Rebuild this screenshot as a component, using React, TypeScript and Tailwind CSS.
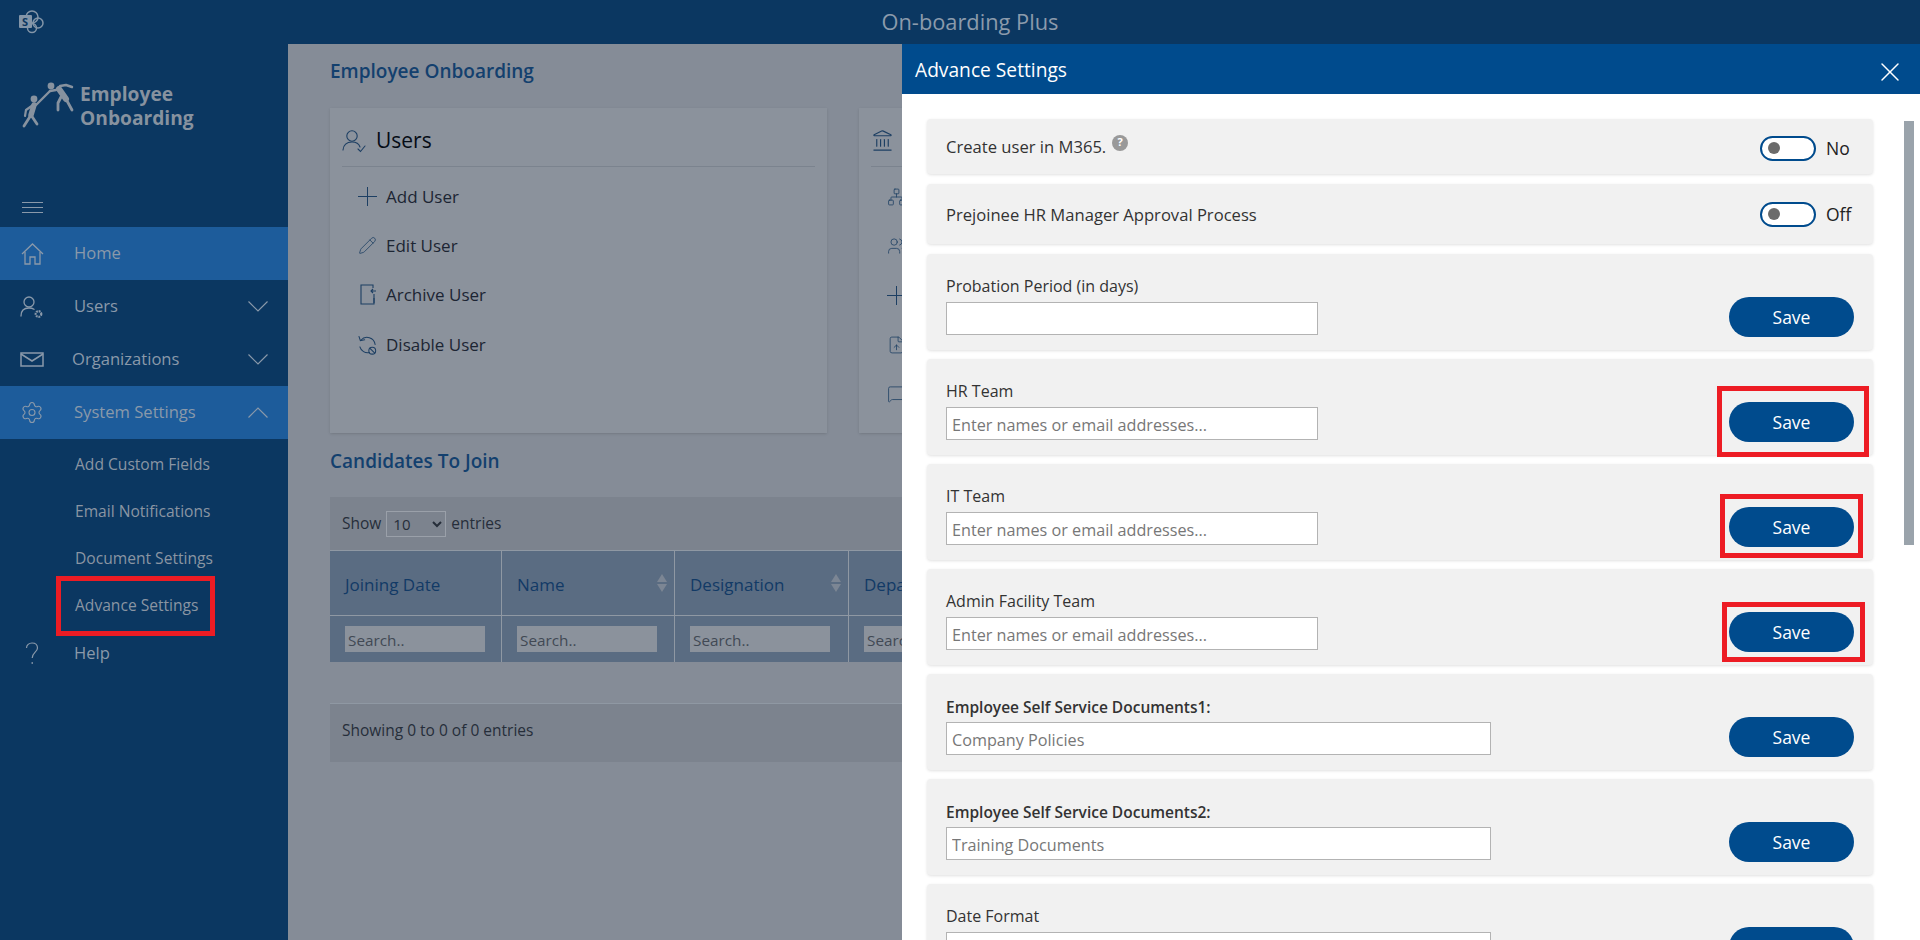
import { FileUp, Landmark, MessageSquare, Network, Pencil, Settings, Users as UsersIcon, X } from 'lucide-react';
import type { ReactNode } from 'react';

const FONT = "font-['Open_Sans','Noto_Sans',sans-serif]";

function SharePointIcon() {
  return (
    <svg width="26" height="24" viewBox="0 0 26 24" fill="none" className="text-[#8395a8]">
      <circle cx="14" cy="7" r="6" stroke="currentColor" strokeWidth="1.5" />
      <circle cx="20" cy="13" r="5" stroke="currentColor" strokeWidth="1.5" />
      <circle cx="14" cy="18" r="4.5" stroke="currentColor" strokeWidth="1.5" />
      <rect x="1" y="5" width="13" height="13" rx="1" fill="currentColor" />
      <text x="4" y="15.5" fontSize="11" fontWeight="700" fill="#0b3761" fontFamily="Open Sans, sans-serif">
        S
      </text>
    </svg>
  );
}

function LogoPeople() {
  return (
    <svg width="52" height="50" viewBox="0 0 52 50" fill="none" stroke="#87929f" strokeLinecap="round" strokeLinejoin="round">
      <circle cx="12" cy="19" r="3.4" fill="#87929f" stroke="none" />
      <circle cx="29" cy="6" r="3.4" fill="#87929f" stroke="none" />
      <path d="M12 25 L9 35" strokeWidth="5.5" />
      <path d="M9 35 L2 46 M9 35 L15 44" strokeWidth="2.8" />
      <path d="M14 25 L28 11" strokeWidth="2.4" />
      <path d="M11 25 L4 30 L3 36" strokeWidth="2.2" />
      <path d="M37 9 L44 19" strokeWidth="6" />
      <path d="M44 19 L50 30" strokeWidth="2.8" />
      <path d="M39 17 L36 23 L36 30" strokeWidth="2.8" />
      <path d="M38 6 L44 5 L50 7" strokeWidth="2.4" />
      <path d="M34 10 L28 11" strokeWidth="2.4" />
    </svg>
  );
}

function HomeIcon() {
  return (
    <svg width="23" height="22" viewBox="0 0 23 22" fill="none" stroke="#8a99aa" strokeWidth="1.3">
      <path d="M1 11 L11.5 1 L22 11" />
      <path d="M4 9 V21 H9 V14 H14 V21 H19 V9" />
    </svg>
  );
}

function MailIcon() {
  return (
    <svg width="24" height="15" viewBox="0 0 24 15" fill="none" stroke="#8a99aa" strokeWidth="1.5">
      <rect x="1" y="1" width="22" height="13" />
      <path d="M1 2 L12 9 L23 2" />
    </svg>
  );
}

function HelpIcon() {
  return (
    <svg width="14" height="23" viewBox="0 0 14 23" fill="none" stroke="#8a99aa" strokeWidth="1.2">
      <path d="M1.5 6 C1.5 3 4 1 7 1 C10.5 1 12.5 3.2 12.5 6 C12.5 10 7.2 10.5 7.2 16" />
      <path d="M7.2 20 V22" />
    </svg>
  );
}

function UserGearIcon() {
  return (
    <svg width="24" height="24" viewBox="0 0 24 24" fill="none" stroke="#8a99aa" strokeWidth="1.3" strokeLinecap="round">
      <circle cx="9" cy="7" r="5" />
      <path d="M1 21 C1 15 4 13 9 13 C11 13 12.5 13.3 14 14.3" />
      <circle cx="18.5" cy="19" r="2.8" strokeWidth="2.2" strokeDasharray="1.8 0.8" strokeLinecap="butt" />
    </svg>
  );
}

function Chevron({ up = false }: { up?: boolean }) {
  return (
    <svg width="20" height="11" viewBox="0 0 20 11" fill="none" stroke="#8a99aa" strokeWidth="1.2">
      <path d={up ? 'M0.5 10.5 L10 1 L19.5 10.5' : 'M0.5 0.5 L10 10 L19.5 0.5'} />
    </svg>
  );
}

function UserCheckIcon() {
  return (
    <svg width="24" height="24" viewBox="0 0 24 24" fill="none" stroke="#1d3f63" strokeWidth="1.1" strokeLinecap="round">
      <circle cx="10" cy="7" r="5.2" />
      <path d="M1 21 C1.5 15.5 5 13 10 13 C14 13 17 15 18 18" />
      <path d="M16 20 L18.5 22.5 L23 17" />
    </svg>
  );
}

function PlusIcon() {
  return (
    <svg width="19" height="19" viewBox="0 0 19 19" fill="none" stroke="#1d3f63" strokeWidth="1">
      <path d="M9.5 0 V19 M0 9.5 H19" />
    </svg>
  );
}

function ArchiveUserIcon() {
  return (
    <svg width="18" height="22" viewBox="0 0 18 22" fill="none" stroke="#1d3f63" strokeWidth="1.1">
      <path d="M14 4 V1 H2 V20 H15 V14" />
      <path d="M17 7 H12 M14 5 L12 7 L14 9 M15 10 V19" />
    </svg>
  );
}

function DisableUserIcon() {
  return (
    <svg width="20" height="22" viewBox="0 0 20 22" fill="none" stroke="#1d3f63" strokeWidth="1.1" strokeLinecap="round">
      <path d="M3 6 A8.5 8.5 0 0 1 18 10.5 M12 19 A8.5 8.5 0 0 1 2 13" />
      <path d="M1 2 L2.5 6.5 L7 5.5" />
      <circle cx="15" cy="17" r="3.6" />
      <path d="M12.6 14.6 L17.4 19.4" />
    </svg>
  );
}

function NavRow({
  icon,
  label,
  active = false,
  chevron,
  textClass = 'pl-[30px]',
}: {
  icon: ReactNode;
  label: string;
  active?: boolean;
  chevron?: 'up' | 'down';
  textClass?: string;
}) {
  return (
    <div className={`flex h-[53px] items-center pl-[20px] pr-[20px] ${active ? 'bg-[#1d5c9b]' : ''}`}>
      <span className="flex w-[24px] justify-center">{icon}</span>
      <span className={`flex-1 text-[16.6px] text-[#8a99aa] ${textClass}`}>{label}</span>
      {chevron && <Chevron up={chevron === 'up'} />}
    </div>
  );
}

function Sidebar() {
  const sub = ['Add Custom Fields', 'Email Notifications', 'Document Settings', 'Advance Settings'];
  return (
    <aside className="w-[288px] shrink-0 bg-[#0b3761]">
      <div className="h-[183px] pl-[22px] pt-[36px]">
        <div className="flex gap-[6px]">
          <LogoPeople />
          <div className="pt-[2px] text-[19.2px] leading-[24px] font-bold text-[#87929f]">
            <div>Employee</div>
            <div>Onboarding</div>
          </div>
        </div>
        <div className="mt-[72px] flex w-[21px] flex-col gap-[4px]">
          <div className="h-px bg-[#8a99aa]" />
          <div className="h-px bg-[#8a99aa]" />
          <div className="h-px bg-[#8a99aa]" />
        </div>
      </div>
      <NavRow active label="Home" icon={<HomeIcon />} />
      <NavRow label="Users" chevron="down" icon={<UserGearIcon />} />
      <NavRow label="Organizations" chevron="down" textClass="pl-[28px]" icon={<MailIcon />} />
      <NavRow active label="System Settings" chevron="up" icon={<Settings size={25} strokeWidth={1.1} className="text-[#8a99aa]" />} />
      <div className="mb-[-2px] pt-[2px]">
        {sub.map((item) => (
          <div key={item} className="flex h-[47px] items-center pl-[75px] text-[15.6px] text-[#8a95a3]">
            {item}
          </div>
        ))}
      </div>
      <NavRow label="Help" icon={<HelpIcon />} />
    </aside>
  );
}

function Card({ icon, title, items }: { icon: ReactNode; title?: string; items: { icon: ReactNode; label?: string }[] }) {
  return (
    <div className="h-[325px] w-[497px] shrink-0 bg-[#8b929c] px-[12px] shadow-sm">
      <div className="flex h-[59px] items-center gap-[10px] border-b border-[#7b838e] pt-[7px] text-[21px] font-medium text-[#050c16]">
        {icon}
        {title}
      </div>
      <div className="pt-[5px]">
        {items.map((row, i) => (
          <div key={i} className="flex h-[49.3px] items-center gap-[9px] pl-[16px] text-[17px] text-[#1c2533]">
            <span className="flex w-[19px] shrink-0 justify-center">{row.icon}</span>
            {row.label}
          </div>
        ))}
      </div>
    </div>
  );
}

function Main() {
  const navy = 'text-[#1d3f63]';
  const columns = [
    { label: 'Joining Date', width: 'w-[172px]' },
    { label: 'Name', width: 'w-[173px]', sort: true },
    { label: 'Designation', width: 'w-[174px]', sort: true },
    { label: 'Department', width: 'w-[174px]' },
  ];
  return (
    <main className="min-w-0 flex-1 overflow-hidden bg-[#858c97] pl-[42px] pt-[13px]">
      <h2 className="pt-[1px] text-[19px] leading-[27px] font-semibold text-[#13406e]">Employee Onboarding</h2>
      <div className="mt-[23px] flex w-[1100px] gap-[32px]">
        <Card
          icon={<UserCheckIcon />}
          title="Users"
          items={[
            { icon: <PlusIcon />, label: 'Add User' },
            { icon: <Pencil size={19} strokeWidth={1} className={navy} />, label: 'Edit User' },
            { icon: <ArchiveUserIcon />, label: 'Archive User' },
            { icon: <DisableUserIcon />, label: 'Disable User' },
          ]}
        />
        <Card
          icon={<Landmark size={23} strokeWidth={1.2} className={navy} />}
          items={[
            { icon: <Network size={20} strokeWidth={1} className={navy} /> },
            { icon: <UsersIcon size={20} strokeWidth={1} className={navy} /> },
            { icon: <PlusIcon /> },
            { icon: <FileUp size={20} strokeWidth={1} className={navy} /> },
            { icon: <MessageSquare size={20} strokeWidth={1} className={navy} /> },
          ]}
        />
      </div>
      <h2 className="mt-[15px] text-[19px] leading-[27px] font-semibold text-[#13406e]">Candidates To Join</h2>
      <div className="mt-[22px] w-[1200px]">
        <div className="flex h-[53px] items-center gap-[5px] bg-[#7c838e] pl-[12px] text-[15.5px] text-[#262e3a]">
          Show
          <select className="h-[26px] w-[60px] border border-[#9aa0a9] bg-[#7c838e] pl-[2px] text-[15px]">
            <option>10</option>
          </select>
          entries
        </div>
        <div className="flex h-[65px] border-t border-[#8f98a3] bg-[#5a6c82]">
          {columns.map((col) => (
            <div key={col.label} className={`relative flex items-center border-r border-[#8f98a3] pl-[15px] pt-[4px] text-[17px] text-[#123a66] ${col.width}`}>
              {col.label}
              {col.sort && (
                <span className="absolute right-[7px] top-[23px] flex flex-col gap-[2px]">
                  <span className="h-0 w-0 border-x-[5px] border-b-[8px] border-x-transparent border-b-[#7c8694]" />
                  <span className="h-0 w-0 border-x-[5px] border-t-[8px] border-x-transparent border-t-[#7c8694]" />
                </span>
              )}
            </div>
          ))}
        </div>
        <div className="flex h-[47px] border-t border-[#8f98a3] bg-[#5a6c82]">
          {columns.map((col) => (
            <div key={col.label} className={`flex items-start border-r border-[#8f98a3] pl-[15px] pt-[10px] ${col.width}`}>
              <input
                placeholder="Search.."
                className="h-[26px] w-[140px] bg-[#8b929c] pl-[3px] pt-[1px] text-[15.3px] placeholder:text-[#414954]"
              />
            </div>
          ))}
        </div>
        <div className="h-[41px] bg-[#858c97]" />
        <div className="flex h-[59px] items-center border-t border-[#8f98a3] bg-[#7c838e] pb-[4px] pl-[12px] text-[15.5px] text-[#262e3a]">
          Showing 0 to 0 of 0 entries
        </div>
      </div>
    </main>
  );
}

function Toggle({ label }: { label: string }) {
  return (
    <div className="flex items-center gap-[10px]">
      <span className="flex h-[25px] w-[56px] items-center rounded-full border-2 border-[#004b8d] bg-white pl-[6px]">
        <span className="h-[12px] w-[12px] rounded-full bg-[#6b6b6b]" />
      </span>
      <span className="w-[28px] text-[17.5px] text-[#222]">{label}</span>
    </div>
  );
}

function FieldRow({ label, placeholder, bold = false, wide = false }: { label: string; placeholder?: string; bold?: boolean; wide?: boolean }) {
  return (
    <div className="flex h-[96px] shrink-0 items-start justify-between rounded-sm bg-[#f1f1f1] px-[19px] pt-[22px] shadow-[0_1px_3px_rgba(0,0,0,0.12)]">
      <div>
        <div className={`mb-[6px] h-[20px] text-[#333] ${bold ? 'text-[15.5px] leading-[22px] font-semibold' : 'text-[16px] leading-[20px]'}`}>{label}</div>
        <input
          placeholder={placeholder}
          className={`block h-[33px] border border-[#b3b3b3] bg-white pl-[5px] pt-[2px] text-[16.2px] placeholder:text-[#777] ${wide ? 'w-[545px]' : 'w-[372px]'}`}
        />
      </div>
      <button className="mt-[21px] h-[40px] w-[125px] rounded-full bg-[#004b8d] text-[17.5px] text-white">Save</button>
    </div>
  );
}

function AdvanceSettingsPanel() {
  return (
    <section className="absolute bottom-0 left-[902px] right-0 top-[44px] flex flex-col bg-white">
      <header className="flex h-[50px] shrink-0 items-center justify-between bg-[#004b8d] pl-[13px] pr-[14px] text-[19.2px] text-white">
        <span className="pt-[2px]">Advance Settings</span>
        <X size={32} strokeWidth={1.1} className="mt-[6px]" />
      </header>
      <div className="flex min-h-0 flex-1 overflow-hidden">
        <div className="ml-[25px] mt-[25px] flex w-[946px] flex-col">
          <div className="flex h-[55px] shrink-0 items-center justify-between rounded-sm bg-[#f1f1f1] px-[19px] pt-[3px] shadow-[0_1px_3px_rgba(0,0,0,0.12)]">
            <div className="mt-[-2px] flex items-start gap-[6px] text-[16.6px] text-[#333]">
              Create user in M365.
              <span className="flex h-[16px] w-[16px] items-center justify-center rounded-full bg-[#999] text-[11px] font-bold text-white">?</span>
            </div>
            <Toggle label="No" />
          </div>
          <div className="my-[10px] flex h-[60px] shrink-0 items-center justify-between rounded-sm bg-[#f1f1f1] px-[19px] shadow-[0_1px_3px_rgba(0,0,0,0.12)]">
            <span className="pt-[2px] text-[16.6px] text-[#333]">Prejoinee HR Manager Approval Process</span>
            <Toggle label="Off" />
          </div>
          <div className="flex flex-col gap-[9px]">
            <FieldRow label="Probation Period (in days)" />
            <FieldRow label="HR Team" placeholder="Enter names or email addresses..." />
            <FieldRow label="IT Team" placeholder="Enter names or email addresses..." />
            <FieldRow label="Admin Facility Team" placeholder="Enter names or email addresses..." />
            <FieldRow bold wide label="Employee Self Service Documents1:" placeholder="Company Policies" />
            <FieldRow bold wide label="Employee Self Service Documents2:" placeholder="Training Documents" />
            <FieldRow wide label="Date Format" />
          </div>
        </div>
        <div className="ml-[31px] mt-[27px] h-[424px] w-[10px] bg-[#9aa3ab]" />
      </div>
    </section>
  );
}

export default function App() {
  return (
    <div className={`relative h-[940px] w-[1920px] overflow-hidden ${FONT}`}>
      <div className="relative flex h-[44px] items-center justify-center bg-[#0b3761] pl-[20px] text-[21.8px] text-[#8b9bac]">
        <span className="absolute left-[18px] top-[10px]">
          <SharePointIcon />
        </span>
        On-boarding Plus
      </div>
      <div className="flex h-[896px]">
        <Sidebar />
        <Main />
      </div>
      <AdvanceSettingsPanel />

      {/* red callouts drawn over the screenshot */}
      <div className="absolute left-[56px] top-[576px] h-[60px] w-[159px] border-[5px] border-[#ed1c24]" />
      <div className="absolute left-[1717px] top-[386px] h-[71px] w-[152px] border-[5px] border-[#ed1c24]" />
      <div className="absolute left-[1720px] top-[494px] h-[64px] w-[143px] border-[5px] border-[#ed1c24]" />
      <div className="absolute left-[1722px] top-[602px] h-[60px] w-[143px] border-[5px] border-[#ed1c24]" />
    </div>
  );
}
